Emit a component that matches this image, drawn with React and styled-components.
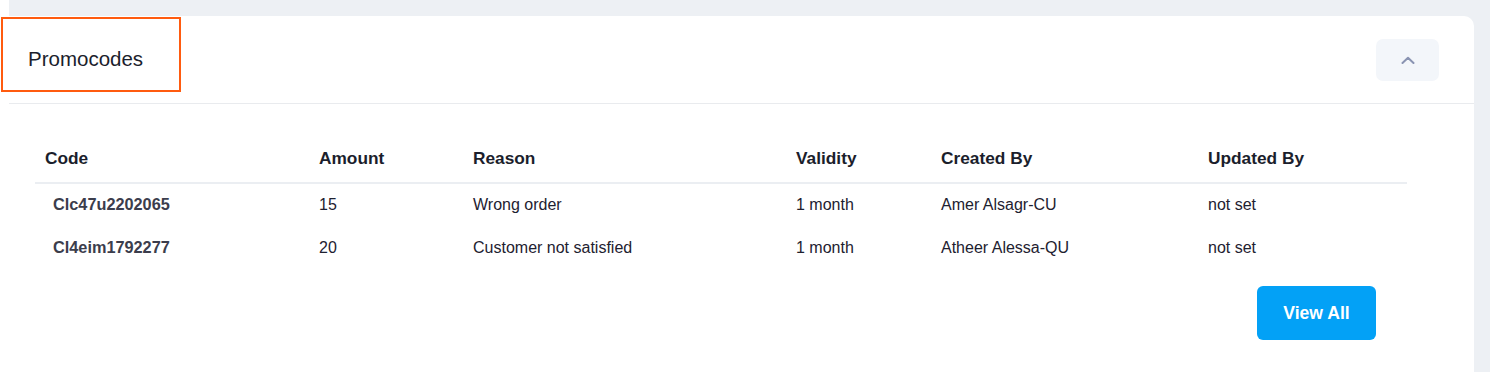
import React from "react";
import styled, { createGlobalStyle } from "styled-components";

const GlobalStyle = createGlobalStyle`
  html, body {
    margin: 0;
    padding: 0;
    background: #ffffff;
    overflow: hidden;
    font-family: "Liberation Sans", Arial, sans-serif;
  }
`;

const Page = styled.div`
  margin-left: 9px;
  height: 372px;
  background: #edf0f4;
  padding: 16px 16px 0 0;
  box-sizing: border-box;
`;

const Card = styled.div`
  position: relative;
  background: #ffffff;
  border-radius: 0 10px 0 0;
  height: 100%;
`;

const CardHeader = styled.div`
  height: 87px;
  display: flex;
  align-items: center;
  justify-content: space-between;
  padding: 0 35px 0 19px;
  border-bottom: 1px solid #e9ebee;
`;

const Title = styled.h3`
  margin: -2px 0 0;
  font-size: 20.5px;
  font-weight: 400;
  color: #1b1e2c;
`;

const Highlight = styled.div`
  position: absolute;
  left: -8px;
  top: 1px;
  width: 180px;
  height: 75px;
  box-sizing: border-box;
  border: 2px solid #ff5b0f;
  pointer-events: none;
`;

const CollapseButton = styled.button`
  width: 63px;
  height: 42px;
  border: none;
  border-radius: 7px;
  background: #f3f6fa;
  display: flex;
  align-items: center;
  justify-content: center;
  padding: 0;
`;

const Body = styled.div`
  padding: 30px 67px 0 26px;
`;

const Table = styled.div`
  display: grid;
  grid-template-columns: 274px 154px 323px 145px 267px 209px;
`;

const HeadCell = styled.div`
  padding: 0 10px;
  height: 48px;
  display: flex;
  align-items: center;
  font-size: 17.3px;
  font-weight: 700;
  color: #1b1e2c;
  border-bottom: 2px solid #ebeef2;
`;

const Cell = styled.div`
  box-sizing: border-box;
  padding: 0 10px 2px ${(p) => (p.$code ? "18px" : "10px")};
  height: 43px;
  display: flex;
  align-items: center;
  font-size: ${(p) => (p.$code ? "16.3px" : "16px")};
  font-weight: ${(p) => (p.$code ? 700 : 400)};
  color: ${(p) => (p.$code ? "#3b3d4c" : "#1e2130")};
`;

const Footer = styled.div`
  display: flex;
  justify-content: flex-end;
  padding: 16px 31px 0 0;
`;

const ViewAll = styled.button`
  width: 119px;
  height: 54px;
  border: none;
  border-radius: 6px;
  background: #03a1f6;
  color: #ffffff;
  font-family: "Liberation Sans", Arial, sans-serif;
  font-size: 17.6px;
  font-weight: 700;
`;

const columns = ["Code", "Amount", "Reason", "Validity", "Created By", "Updated By"];

const rows = [
  ["Clc47u2202065", "15", "Wrong order", "1 month", "Amer Alsagr-CU", "not set"],
  ["Cl4eim1792277", "20", "Customer not satisfied", "1 month", "Atheer Alessa-QU", "not set"],
];

export default function App() {
  return (
    <>
      <GlobalStyle />
      <Page>
        <Card>
          <Highlight />
          <CardHeader>
            <Title>Promocodes</Title>
            <CollapseButton>
              <svg width="14" height="8" viewBox="0 0 14 8" fill="none">
                <path
                  d="M1.5 7 L7 1.8 L12.5 7"
                  stroke="#8a94b2"
                  strokeWidth="2"
                  strokeLinecap="round"
                  strokeLinejoin="round"
                />
              </svg>
            </CollapseButton>
          </CardHeader>
          <Body>
            <Table>
              {columns.map((c) => (
                <HeadCell key={c}>{c}</HeadCell>
              ))}
              {rows.map((r) =>
                r.map((v, i) => (
                  <Cell key={r[0] + i} $code={i === 0}>
                    {v}
                  </Cell>
                ))
              )}
            </Table>
            <Footer>
              <ViewAll>View All</ViewAll>
            </Footer>
          </Body>
        </Card>
      </Page>
    </>
  );
}
